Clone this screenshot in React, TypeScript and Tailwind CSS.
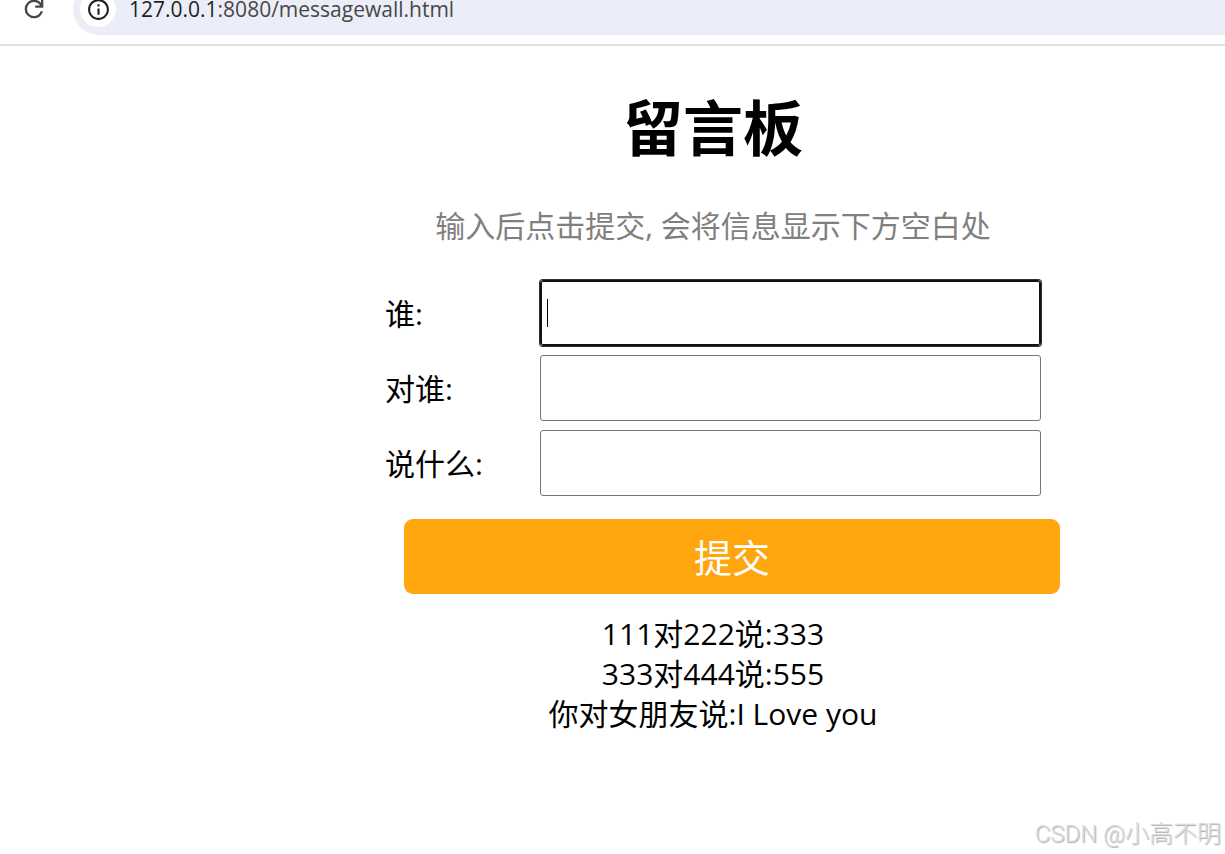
import { useState } from 'react';

const fields = [
  { id: 'from', label: '谁:' },
  { id: 'to', label: '对谁:' },
  { id: 'say', label: '说什么:' },
];

const initialMessages = ['111对222说:333', '333对444说:555', '你对女朋友说:I Love you'];

function AddressBar() {
  return (
    <header className="flex h-[46px] items-end overflow-hidden border-b-2 border-[#e1e1e1] pb-[9px]">
      <div className="flex h-[52px] grow shrink-0 items-center">
        <button type="button" aria-label="刷新" className="ml-5 shrink-0 text-[#454746]">
          <svg viewBox="0 0 24 24" className="size-7" fill="currentColor">
            <path d="M12 20q-3.35 0-5.675-2.325T4 12q0-3.35 2.325-5.675T12 4q1.725 0 3.3.713T18 6.75V4h2v7h-7V9h4.2q-.8-1.4-2.187-2.2T12 6Q9.5 6 7.75 7.75T6 12q0 2.5 1.75 4.25T12 18q1.925 0 3.475-1.1T17.65 14h2.1q-.7 2.65-2.85 4.325T12 20Z" />
          </svg>
        </button>
        <div className="ml-[25px] flex h-full grow items-center rounded-l-full bg-[#ebeef8] pl-[7px]">
          <button
            type="button"
            aria-label="网站信息"
            className="flex size-9 shrink-0 items-center justify-center rounded-full bg-white text-[#1f1f1f]"
          >
            <svg viewBox="0 0 24 24" className="size-[25px]" fill="currentColor">
              <path d="M11 7h2v2h-2zm0 4h2v6h-2zm1-9C6.48 2 2 6.48 2 12s4.48 10 10 10 10-4.48 10-10S17.52 2 12 2zm0 18c-4.41 0-8-3.59-8-8s3.59-8 8-8 8 3.59 8 8-3.59 8-8 8z" />
            </svg>
          </button>
          <p className="ml-[13px] text-[21px] leading-[18px] text-[#474747]">
            <span className="text-[#1f1f1f]">127.0.0.1</span>:8080/messagewall.html
          </p>
        </div>
      </div>
    </header>
  );
}

export default function App() {
  const [values, setValues] = useState<Record<string, string>>({ from: '', to: '', say: '' });
  const [messages, setMessages] = useState(initialMessages);

  const handleSubmit = (e: React.FormEvent) => {
    e.preventDefault();
    if (!values.from || !values.to || !values.say) return;
    setMessages([...messages, `${values.from}对${values.to}说:${values.say}`]);
    setValues({ from: '', to: '', say: '' });
  };

  return (
    <div
      lang="zh-CN"
      className="flex min-h-screen flex-col bg-white font-['Open_Sans','Noto_Sans_CJK_SC',sans-serif] text-black"
    >
      <AddressBar />
      <main className="grow pl-[201px] text-[30px] leading-10">
        <div className="mx-auto max-w-[656px]">
          <h1 className="mt-[42px] text-center text-[60px] leading-[80px] font-bold">留言板</h1>
          <p className="mt-[38px] text-center text-[#808080]">输入后点击提交, 会将信息显示下方空白处</p>

          <form onSubmit={handleSubmit} className="mt-[30px]">
            {fields.map((field, i) => (
              <div key={field.id} className="flex h-[75px] items-start pt-1">
                <label htmlFor={field.id} className="w-[155px] shrink-0 leading-[68px]">
                  {field.label}
                </label>
                <div className="relative grow">
                  <input
                    id={field.id}
                    type="text"
                    autoComplete="off"
                    autoFocus={i === 0}
                    value={values[field.id]}
                    onChange={(e) => setValues({ ...values, [field.id]: e.target.value })}
                    className="peer block h-[66px] w-full rounded-[3px] border border-[#767676] px-1.5 caret-transparent outline-none focus:border-[#101010] focus:ring-1 focus:ring-[#303030] focus:inset-ring-1 focus:inset-ring-[#101010]"
                  />
                  {!values[field.id] && (
                    <span className="pointer-events-none absolute top-[19px] left-[7px] hidden h-7 w-px bg-black peer-focus:block" />
                  )}
                </div>
              </div>
            ))}
            <button
              type="submit"
              className="mt-[18px] ml-[19px] h-[75px] w-full rounded-[9px] bg-[#ffa50d] text-[38px] text-white"
            >
              提交
            </button>
          </form>

          <ul className="mt-5 text-center">
            {messages.map((message, i) => (
              <li key={i}>{message}</li>
            ))}
          </ul>
        </div>
      </main>
      <footer className="pr-1 text-right font-[Roboto,'Noto_Sans_CJK_SC',sans-serif] text-2xl leading-10 font-light text-[#dcdcdc] [text-shadow:1px_1px_1px_#aaa]">
        CSDN @小高不明
      </footer>
    </div>
  );
}
